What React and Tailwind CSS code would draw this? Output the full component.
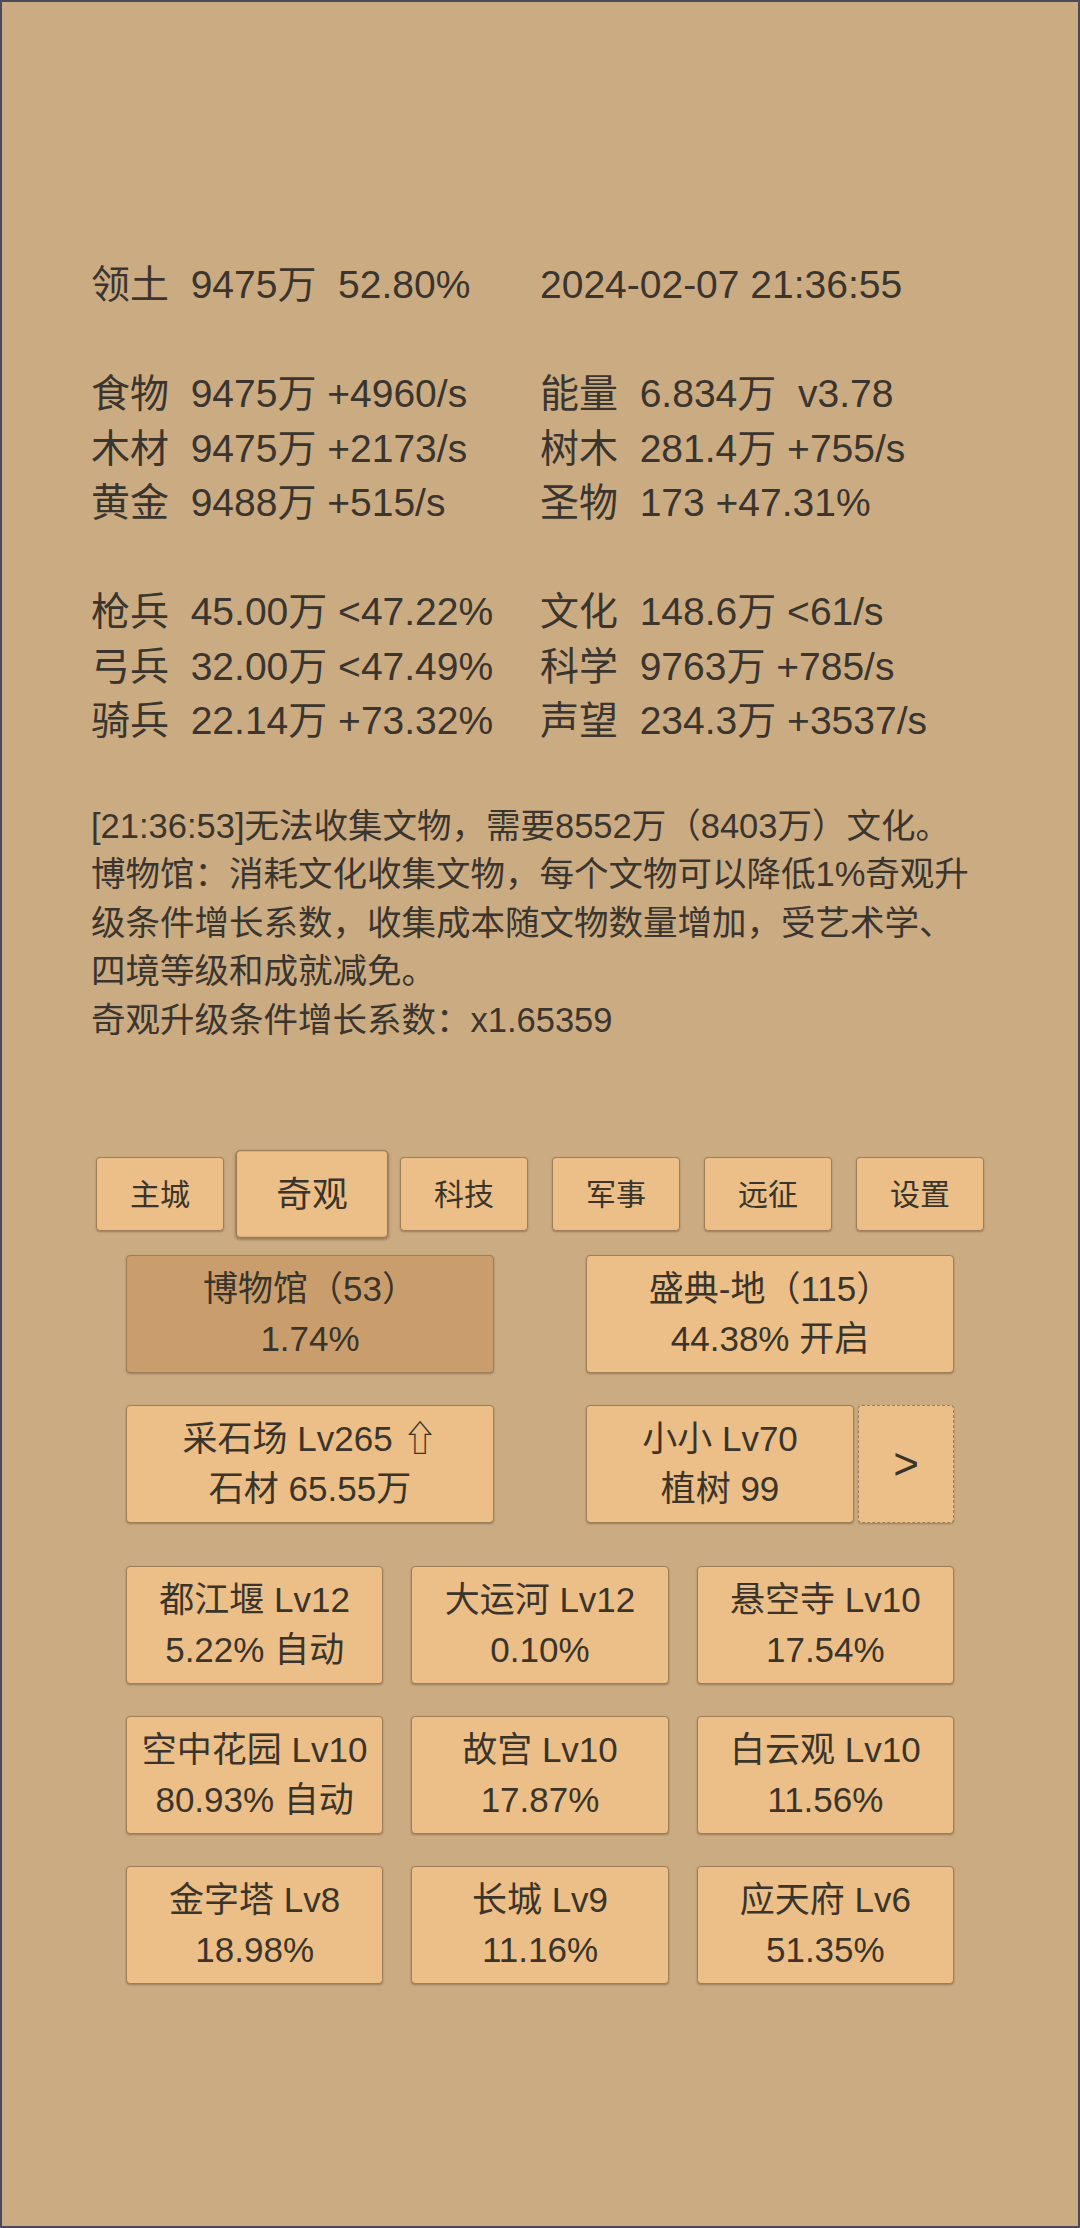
import React from 'react';

const stats = [
  ['领土  9475万  52.80%', '2024-02-07 21:36:55'],
  null,
  ['食物  9475万 +4960/s', '能量  6.834万  v3.78'],
  ['木材  9475万 +2173/s', '树木  281.4万 +755/s'],
  ['黄金  9488万 +515/s', '圣物  173 +47.31%'],
  null,
  ['枪兵  45.00万 <47.22%', '文化  148.6万 <61/s'],
  ['弓兵  32.00万 <47.49%', '科学  9763万 +785/s'],
  ['骑兵  22.14万 +73.32%', '声望  234.3万 +3537/s'],
];

const logLines = [
  '[21:36:53]无法收集文物，需要8552万（8403万）文化。',
  '博物馆：消耗文化收集文物，每个文物可以降低1%奇观升',
  '级条件增长系数，收集成本随文物数量增加，受艺术学、',
  '四境等级和成就减免。',
  '奇观升级条件增长系数：x1.65359',
];

const tabs = ['主城', '奇观', '科技', '军事', '远征', '设置'];

const wonders = [
  [
    ['都江堰 Lv12', '5.22% 自动'],
    ['大运河 Lv12', '0.10%'],
    ['悬空寺 Lv10', '17.54%'],
  ],
  [
    ['空中花园 Lv10', '80.93% 自动'],
    ['故宫 Lv10', '17.87%'],
    ['白云观 Lv10', '11.56%'],
  ],
  [
    ['金字塔 Lv8', '18.98%'],
    ['长城 Lv9', '11.16%'],
    ['应天府 Lv6', '51.35%'],
  ],
];

function Card({ lines, active = false, className = '' }) {
  return (
    <button
      className={`flex h-[118px] flex-col items-center justify-center rounded-[4px] border border-[#9e7e58] text-[35px] leading-[50px] text-[#3b342b] shadow-[0_1px_2px_rgba(60,40,20,0.35)] ${active ? 'bg-[#c99e6c]' : 'bg-[#ebbf87]'} ${className}`}
    >
      {lines.map((l) => (
        <div key={l} className="whitespace-pre">{l}</div>
      ))}
    </button>
  );
}

export default function App() {
  return (
    <div
      className="h-[2228px] w-[1080px] border-2 border-[#4b4a5c] bg-[#cbab82] text-[#3a352e]"
      style={{ fontFamily: '"Liberation Sans", "Noto Sans CJK SC", sans-serif' }}
    >
      <div className="pl-[89px] pt-[256px] text-[39px] leading-[54.5px]">
        {stats.map((row, i) =>
          row ? (
            <div key={i} className="flex">
              <div className="w-[449px] whitespace-pre">{row[0]}</div>
              <div className="whitespace-pre">{row[1]}</div>
            </div>
          ) : (
            <div key={i} className="h-[54.5px]" />
          )
        )}
      </div>

      <div className="mt-[53px] pl-[89px] text-[34.5px] leading-[48.5px]">
        {logLines.map((l) => (
          <div key={l} className="whitespace-pre">{l}</div>
        ))}
      </div>

      <div className="mt-[113px] flex justify-center gap-[24px]">
        {tabs.map((t) => (
          <button
            key={t}
            className={`h-[74px] w-[128px] rounded-[4px] border border-[#9e7e58] bg-[#ebbf87] text-[30px] text-[#3b342b] shadow-[0_1px_2px_rgba(60,40,20,0.35)] ${t === '奇观' ? 'scale-[1.19]' : ''}`}
          >
            {t}
          </button>
        ))}
      </div>

      <div className="mx-auto mt-[24px] w-[828px]">
        <div className="flex justify-between">
          <Card className="w-[368px]" active lines={['博物馆（53）', '1.74%']} />
          <Card className="w-[368px]" lines={['盛典-地（115）', '44.38% 开启']} />
        </div>

        <div className="mt-[32px] flex justify-between">
          <Card className="w-[368px]" lines={['采石场 Lv265 ⇧', '石材 65.55万']} />
          <div className="flex w-[368px] gap-[4px]">
            <Card className="w-[268px]" lines={['小小 Lv70', '植树 99']} />
            <button className="flex h-[118px] flex-1 items-center justify-center rounded-[4px] border border-dashed border-[#9e7e58] bg-[#ebbf87] text-[44px] text-[#3b342b] shadow-[0_1px_2px_rgba(60,40,20,0.35)]">
              &gt;
            </button>
          </div>
        </div>

        <div className="mt-[43px] flex flex-col gap-[32px]">
          {wonders.map((row, i) => (
            <div key={i} className="grid grid-cols-3 gap-[28px]">
              {row.map((w) => (
                <Card key={w[0]} className="h-[117px]" lines={w} />
              ))}
            </div>
          ))}
        </div>
      </div>
    </div>
  );
}
